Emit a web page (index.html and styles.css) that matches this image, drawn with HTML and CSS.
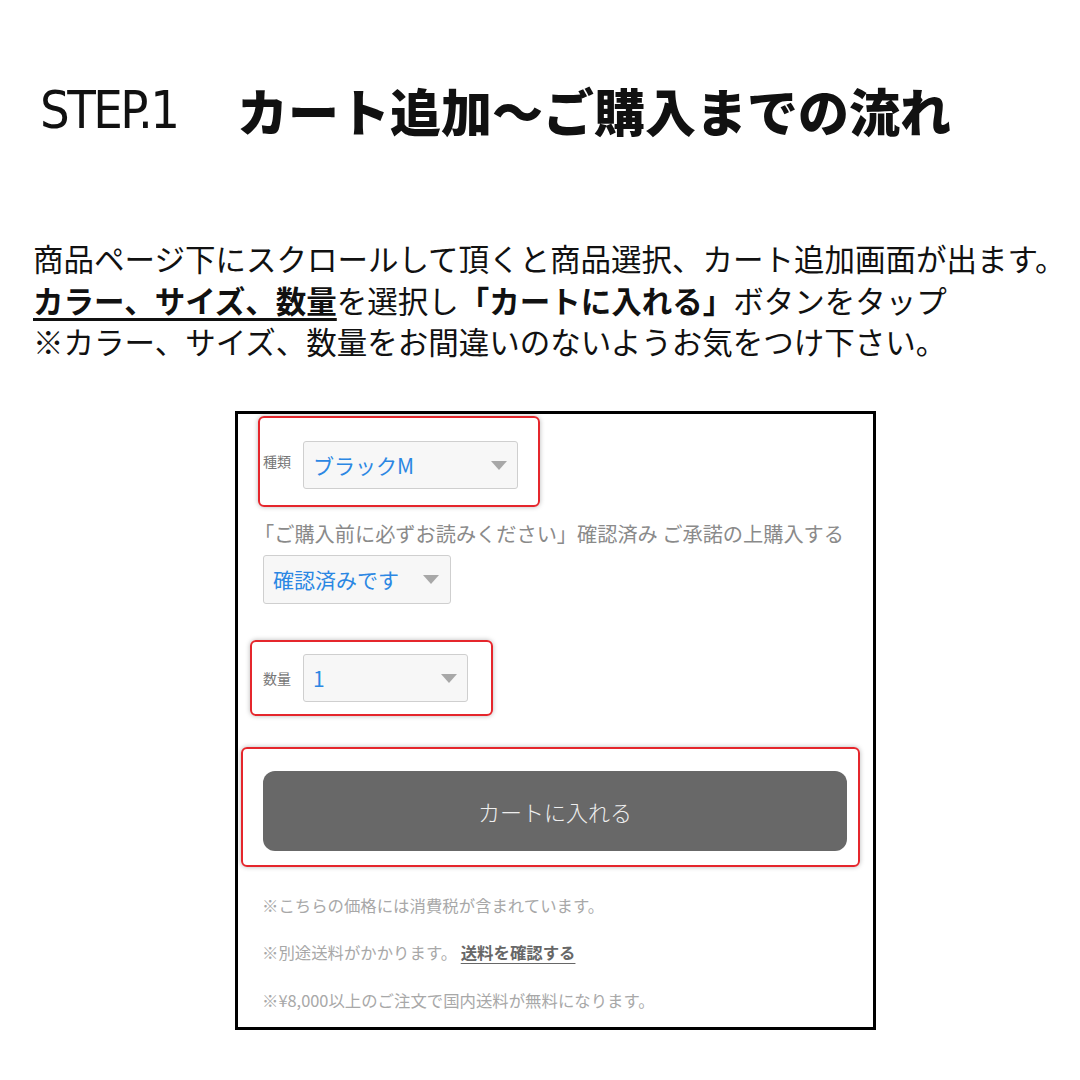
FILE: index.html
```html
<!DOCTYPE html>
<html lang="ja">
<head>
    <meta charset="UTF-8">
    <meta name="viewport" content="width=device-width, initial-scale=1.0">
    <title>STEP.1 カート追加〜ご購入までの流れ</title>
    <link rel="stylesheet" href="styles.css">
</head>
<body>
    <div class="page">
        <h1 class="title">
            <span class="step">STEP.1</span>
            <span class="title-main">カート追加〜ご購入までの流れ</span>
        </h1>

        <div class="intro">
            <p>商品ページ下にスクロールして頂くと商品選択、カート追加画面が出ます。</p>
            <p><strong class="em-line">カラー、サイズ、数量</strong>を選択し<strong>「カートに入れる」</strong>ボタンをタップ</p>
            <p>※カラー、サイズ、数量をお間違いのないようお気をつけ下さい。</p>
        </div>

        <div class="shot">
            <div class="mark mark-type">
                <span class="field-label">種類</span>
                <div class="select select-type">
                    <span class="select-value">ブラックM</span>
                    <span class="caret"></span>
                </div>
            </div>

            <p class="notice">「ご購入前に必ずお読みください」確認済み ご承諾の上購入する</p>
            <div class="select select-confirm">
                <span class="select-value">確認済みです</span>
                <span class="caret"></span>
            </div>

            <div class="mark mark-qty">
                <span class="field-label">数量</span>
                <div class="select select-qty">
                    <span class="select-value">1</span>
                    <span class="caret"></span>
                </div>
            </div>

            <div class="mark mark-cart">
                <button class="cart-btn">カートに入れる</button>
            </div>

            <ul class="notes">
                <li>※こちらの価格には消費税が含まれています。</li>
                <li>※別途送料がかかります。 <a class="notes-link">送料を確認する</a></li>
                <li>※¥8,000以上のご注文で国内送料が無料になります。</li>
            </ul>
        </div>
    </div>
</body>
</html>
```

FILE: styles.css
```css
:root {
    --text: #111111;
    --mark: #e5262c;
    --select-text: #2b87e3;
    --muted: #8a8a8a;
    --note: #a8a8a8;
    --jp: "Noto Sans CJK JP", "Noto Sans", sans-serif;
}

* {
    margin: 0;
    padding: 0;
    box-sizing: border-box;
}

body {
    background: #ffffff;
    color: var(--text);
    font-family: var(--jp);
    width: 1080px;
    height: 1080px;
    overflow: hidden;
}

.page {
    padding-top: 80px;
}

/* heading */
.title {
    display: flex;
    align-items: center;
    height: 60px;
    padding-left: 40px;
    font-weight: 400;
}

.step {
    font-family: "Liberation Sans Narrow", "DejaVu Sans Condensed", sans-serif;
    font-size: 52px;
    letter-spacing: -2.5px;
    line-height: 60px;
    width: 197px;
}

.title-main {
    font-family: var(--jp);
    font-size: 51px;
    font-weight: 900;
    line-height: 60px;
}

/* intro text */
.intro {
    margin-top: 98px;
    padding-left: 33px;
    font-size: 30.5px;
    line-height: 41.5px;
    white-space: nowrap;
}

.intro strong {
    font-weight: 700;
}

.em-line {
    text-decoration: underline;
    text-decoration-thickness: 3px;
    text-underline-offset: 5px;
}

/* screenshot box */
.shot {
    margin-top: 48px;
    margin-left: 235px;
    width: 641px;
    height: 619px;
    border: 3px solid #000000;
    display: flex;
    flex-direction: column;
    align-items: flex-start;
    overflow: hidden;
}

.mark {
    border: 2px solid var(--mark);
    border-radius: 6px;
    box-shadow: 0 0 5px rgba(0, 0, 0, 0.28);
    display: flex;
    align-items: center;
}

.mark-type {
    margin-top: 2px;
    margin-left: 20px;
    width: 282px;
    height: 91px;
    padding-left: 3px;
}

.mark-qty {
    margin-top: 36px;
    margin-left: 12px;
    width: 243px;
    height: 76px;
    padding-left: 11px;
}

.mark-cart {
    margin-top: 31px;
    margin-left: 3px;
    width: 619px;
    height: 120px;
    padding-left: 20px;
}

.field-label {
    font-size: 14px;
    color: #777777;
    width: 40px;
    flex-shrink: 0;
}

.select {
    display: flex;
    align-items: center;
    justify-content: space-between;
    background: #f7f7f7;
    border: 1px solid #cfcfcf;
    border-radius: 3px;
    height: 48px;
    padding: 0 10px 0 9px;
    color: var(--select-text);
    font-size: 21px;
}

.select-type {
    width: 215px;
    margin-top: 8px;
}

.select-qty {
    width: 165px;
    margin-top: 1px;
}

.select-confirm {
    width: 188px;
    height: 49px;
    margin-top: 7px;
    margin-left: 25px;
    padding-right: 11px;
}

.caret {
    width: 0;
    height: 0;
    border-left: 8px solid transparent;
    border-right: 8px solid transparent;
    border-top: 9px solid #a8a8a8;
}

.notice {
    margin-top: 13px;
    margin-left: 16px;
    font-size: 20.2px;
    line-height: 28px;
    color: var(--muted);
    white-space: nowrap;
}

.cart-btn {
    width: 584px;
    height: 80px;
    margin-top: 8px;
    border: none;
    border-radius: 12px;
    background: #686868;
    color: #eeeeee;
    font-family: var(--jp);
    font-size: 22px;
    font-weight: 300;
}

.notes {
    list-style: none;
    margin-top: 26px;
    margin-left: 24px;
    font-size: 16.4px;
    line-height: 24px;
    color: var(--note);
    display: flex;
    flex-direction: column;
    gap: 23.5px;
}

.notes-link {
    color: #676767;
    font-weight: 700;
    text-decoration: underline;
    text-underline-offset: 4px;
}
```
